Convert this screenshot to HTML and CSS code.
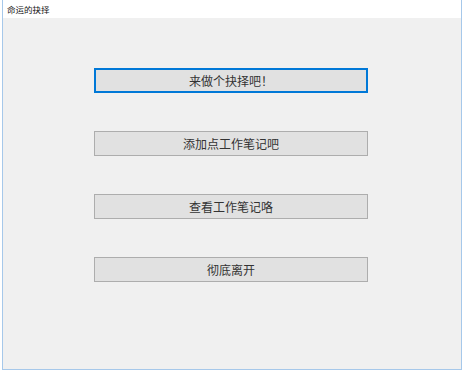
FILE: index.html
```html
<!DOCTYPE html>
<html lang="zh-CN">
<head>
    <meta charset="UTF-8">
    <title>命运的抉择</title>
    <link rel="stylesheet" href="styles.css">
</head>
<body>

    <div class="window">
        <div class="titlebar">命运的抉择</div>
        <div class="content">
            <button class="btn focused">来做个抉择吧！</button>
            <button class="btn">添加点工作笔记吧</button>
            <button class="btn">查看工作笔记咯</button>
            <button class="btn">彻底离开</button>
        </div>
    </div>

</body>
</html>
```

FILE: styles.css
```css
body {
    margin: 0;
    background-color: #ffffff;
    font-family: "Noto Sans CJK SC", sans-serif;
}

.window {
    width: 458px;
    height: 369px;
    margin-left: 2px;
    border: 1px solid #a6c8ea;
    border-top: none;
    background-color: #f0f0f0;
    display: flex;
    flex-direction: column;
}

.titlebar {
    height: 18px;
    line-height: 18px;
    background-color: #ffffff;
    font-size: 8.5px;
    color: #111;
    padding-left: 4px;
}

.content {
    display: flex;
    flex-direction: column;
    padding-top: 50px;
    padding-left: 91px;
    gap: 38px;
}

.btn {
    width: 274px;
    height: 25px;
    padding: 0;
    margin: 0;
    background-color: #e1e1e1;
    border: 1px solid #adadad;
    font-family: "Noto Sans CJK SC", sans-serif;
    font-size: 12px;
    color: #333;
    cursor: pointer;
}

.btn.focused {
    border: 2px solid #0078d7;
}
```
